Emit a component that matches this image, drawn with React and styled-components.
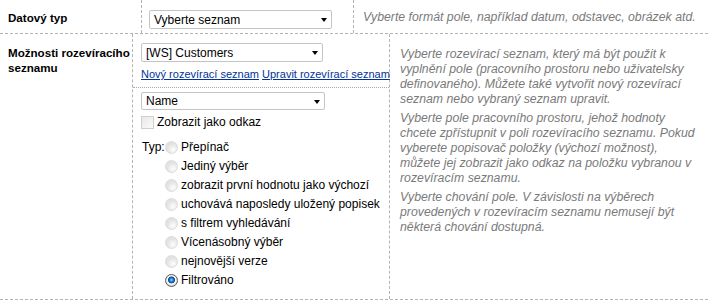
import React from 'react';
import styled, { createGlobalStyle } from 'styled-components';

const GlobalStyle = createGlobalStyle`
  html, body {
    margin: 0;
    padding: 0;
    background: #ffffff;
  }
  body {
    font-family: 'Liberation Sans', Arial, sans-serif;
    font-size: 12px;
    color: #000000;
  }
`;

const LINE = '#b4b4b4';

const Form = styled.div`
  width: 708px;
`;

const Row = styled.div`
  display: grid;
  grid-template-columns: ${(props) => props.$cols};
  height: ${(props) => props.$height}px;
  box-sizing: border-box;
  border-bottom: 1px dashed ${LINE};
`;

const LabelCell = styled.div`
  padding: ${(props) => props.$top}px 0 0 8px;
  border-right: 1px dashed ${LINE};
  font-weight: bold;
  font-size: 11.6px;
  line-height: 15px;
`;

const ControlCell = styled.div`
  border-right: 1px dashed ${LINE};
  display: flex;
  flex-direction: column;
  padding: ${(props) => props.$pad || '0'};
`;

const DescCell = styled.div`
  padding: ${(props) => props.$top}px 0 0 ${(props) => props.$left}px;
  font-style: italic;
  font-size: 12.3px;
  color: #7a7a7a;
  line-height: 15px;
  white-space: nowrap;
  overflow: hidden;
`;

const DescPara = styled.p`
  margin: 0 0 4px 0;
`;

const SelectBox = styled.div`
  box-sizing: border-box;
  width: ${(props) => props.$width}px;
  height: ${(props) => props.$height || 19}px;
  border: 1px solid #c4c4c4;
  border-radius: 2px;
  background: #ffffff;
  display: flex;
  align-items: center;
  justify-content: space-between;
  padding: 0 4px 0 4px;
  font-size: 12px;
  line-height: 14px;
  color: #000;
`;

const Arrow = styled.span`
  width: 0;
  height: 0;
  border-left: 3.5px solid transparent;
  border-right: 3.5px solid transparent;
  border-top: 4px solid #000;
  margin-top: 1px;
`;

const TopBlock = styled.div`
  padding: 9px 0 6px 8px;
`;

const LinkLine = styled.div`
  margin-top: 6px;
  font-size: 11px;
  line-height: 13px;
  white-space: nowrap;
`;

const Link = styled.a`
  color: #003399;
  text-decoration: underline;
  cursor: pointer;
`;

const BottomBlock = styled.div`
  border-top: 1px dotted #a8a8a8;
  padding: 4px 0 0 8px;
  display: flex;
  flex-direction: column;
`;

const CheckRow = styled.label`
  display: flex;
  align-items: center;
  height: 15px;
  margin-top: 5px;
  line-height: 15px;
`;

const Checkbox = styled.span`
  box-sizing: border-box;
  width: 13px;
  height: 13px;
  border: 1px solid #cfcfcf;
  background: linear-gradient(135deg, #e8e8e8 0%, #fafafa 100%);
  margin-right: 3px;
`;

const TypeGroup = styled.div`
  display: grid;
  grid-template-columns: 24px 1fr;
  margin-top: 8px;
`;

const TypeLabel = styled.div`
  padding-left: 1px;
  height: 19px;
  line-height: 19px;
`;

const RadioList = styled.div`
  display: flex;
  flex-direction: column;
`;

const RadioRow = styled.label`
  display: flex;
  align-items: center;
  height: 19px;
  line-height: 19px;
  white-space: nowrap;
`;

const Radio = styled.span`
  box-sizing: border-box;
  width: 13px;
  height: 13px;
  border-radius: 50%;
  margin-right: 3px;
  flex: none;
  border: 1px solid ${(props) => (props.$checked ? '#5a5a5a' : '#dcdcdc')};
  background: ${(props) =>
    props.$checked
      ? 'radial-gradient(circle at 50% 45%, #9fd4f7 0, #2a86d6 1.6px, #0b4a9a 3.2px, #ffffff 3.8px, #f2f2f2 4.6px, #d8d8d8 5.5px)'
      : 'radial-gradient(circle at 65% 70%, #fdfdfd 0, #f0f0f0 3px, #e2e2e2 6px)'};
`;

const radios = [
  'Přepínač',
  'Jediný výběr',
  'zobrazit první hodnotu jako výchozí',
  'uchovává naposledy uložený popisek',
  's filtrem vyhledávání',
  'Vícenásobný výběr',
  'nejnovější verze',
  'Filtrováno',
];

// line breaks follow the reference wrapping
const helpText = [
  [
    'Vyberte rozevírací seznam, který má být použit k',
    'vyplnění pole (pracovního prostoru nebo uživatelsky',
    'definovaného). Můžete také vytvořit nový rozevírací',
    'seznam nebo vybraný seznam upravit.',
  ],
  [
    'Vyberte pole pracovního prostoru, jehož hodnoty',
    'chcete zpřístupnit v poli rozevíracího seznamu. Pokud',
    'vyberete popisovač položky (výchozí možnost),',
    'můžete jej zobrazit jako odkaz na položku vybranou v',
    'rozevíracím seznamu.',
  ],
  [
    'Vyberte chování pole. V závislosti na výběrech',
    'provedených v rozevíracím seznamu nemusejí být',
    'některá chování dostupná.',
  ],
];

const App = () => {
  return (
    <>
      <GlobalStyle />
      <Form>
        <Row $cols="142px 212px 1fr" $height={34}>
          <LabelCell $top={10}>Datový typ</LabelCell>
          <ControlCell $pad="10px 0 0 7px">
            <SelectBox $width={183}>
              <span>Vyberte seznam</span>
              <Arrow />
            </SelectBox>
          </ControlCell>
          <DescCell $top={10} $left={9}>
            Vyberte formát pole, například datum, odstavec, obrázek atd.
          </DescCell>
        </Row>

        <Row $cols="133px 257px 1fr" $height={266}>
          <LabelCell $top={11}>
            Možnosti rozevíracího
            <br />
            seznamu
          </LabelCell>
          <ControlCell>
            <TopBlock>
              <SelectBox $width={182}>
                <span>[WS] Customers</span>
                <Arrow />
              </SelectBox>
              <LinkLine>
                <Link>Nový rozevírací seznam</Link> <Link>Upravit rozevírací seznam</Link>
              </LinkLine>
            </TopBlock>
            <BottomBlock>
              <SelectBox $width={184} $height={18}>
                <span>Name</span>
                <Arrow />
              </SelectBox>
              <CheckRow>
                <Checkbox />
                Zobrazit jako odkaz
              </CheckRow>
              <TypeGroup>
                <TypeLabel>Typ:</TypeLabel>
                <RadioList>
                  {radios.map((label, i) => (
                    <RadioRow key={label}>
                      <Radio $checked={i === radios.length - 1} />
                      {label}
                    </RadioRow>
                  ))}
                </RadioList>
              </TypeGroup>
            </BottomBlock>
          </ControlCell>
          <DescCell $top={13} $left={10}>
            {helpText.map((lines, p) => (
              <DescPara key={p}>
                {lines.map((line, i) => (
                  <React.Fragment key={i}>
                    {line}
                    {i < lines.length - 1 && <br />}
                  </React.Fragment>
                ))}
              </DescPara>
            ))}
          </DescCell>
        </Row>
      </Form>
    </>
  );
};

export default App;
